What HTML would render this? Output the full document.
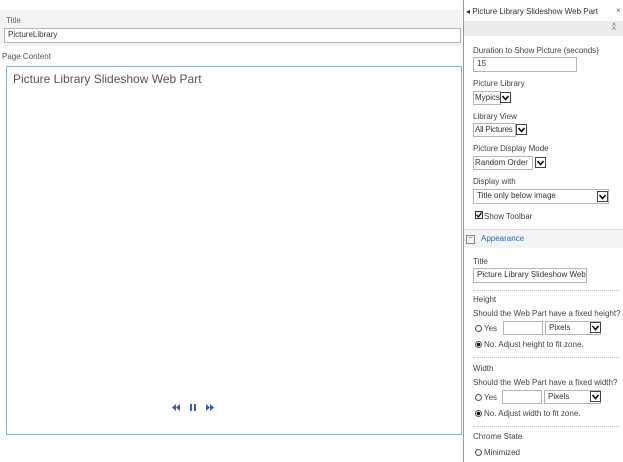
<!DOCTYPE html><html><head><style>
body{margin:0;width:623px;height:462px;overflow:hidden;background:#fff;font-family:"Liberation Sans",sans-serif;font-size:8px;color:#444;position:relative}
.a{position:absolute;white-space:nowrap}
.in{position:absolute;border:1px solid #b5b5b5;background:#fff;box-sizing:border-box;padding-left:3px;line-height:12px;font-size:8px;color:#333;white-space:nowrap;overflow:hidden}
.dd{position:absolute;width:11px;height:11px;border:1px solid #444;box-sizing:border-box;background:#fff}
.dd svg{display:block}
.dot{position:absolute;left:473px;width:146px;border-top:1px dotted #bbb}
.r{position:absolute;width:7px;height:7px;border:1px solid #555;border-radius:50%;box-sizing:border-box}
</style></head><body>
<div class="a" style="left:0;top:10px;width:462px;height:36px;background:#f3f3f3"></div>
<div class="a" style="left:6px;top:16px;color:#666">Title</div>
<div class="in" style="left:4px;top:28px;width:457px;height:15px">PictureLibrary</div>
<div class="a" style="left:2px;top:52px;color:#555">Page Content</div>
<div class="a" style="left:6px;top:66px;width:454px;height:367px;border:1px solid #8ab0cc"></div>
<div class="a" style="left:13px;top:72px;font-size:12px;color:#555">Picture Library Slideshow Web Part</div>
<svg class="a" style="left:172px;top:403px" width="44" height="9" viewBox="0 0 44 9" fill="#3a5fb0">
<path d="M0 4.5L4 1V8Z M4 4.5L8 1V8Z"/><rect x="18" y="1" width="2" height="7"/><rect x="22" y="1" width="2" height="7"/><path d="M34 1L38 4.5L34 8Z M38 1L42 4.5L38 8Z"/></svg>
<div class="a" style="left:463px;top:0;width:1px;height:462px;background:#999"></div>
<div class="a" style="left:466px;top:7px;color:#333">◂ Picture Library Slideshow Web Part</div>
<div class="a" style="left:616px;top:6px;color:#666">×</div>
<div class="a" style="left:464px;top:21px;width:159px;height:15px;background:#ececec"></div>
<div class="a" style="left:612px;top:24px;color:#666;font-size:7px;line-height:4px">˄<br>˄</div>
<div class="a" style="left:473px;top:46px">Duration to Show Picture (seconds)</div>
<div class="in" style="left:473px;top:57px;width:104px;height:15px">15</div>
<div class="a" style="left:473px;top:79px">Picture Library</div>
<div class="in" style="left:473px;top:91px;width:28px;height:14px;padding-left:1px">Mypics</div><div class="dd" style="left:500px;top:92px"><svg width="9" height="9"><path d="M1.5 3L4.5 6.5L7.5 3" stroke="#000" stroke-width="1.6" fill="none"/></svg></div>
<div class="a" style="left:473px;top:112px">Library View</div>
<div class="in" style="left:473px;top:123px;width:43px;height:14px;padding-left:1px;letter-spacing:-0.2px">All Pictures</div><div class="dd" style="left:516px;top:124px"><svg width="9" height="9"><path d="M1.5 3L4.5 6.5L7.5 3" stroke="#000" stroke-width="1.6" fill="none"/></svg></div>
<div class="a" style="left:473px;top:144px">Picture Display Mode</div>
<div class="in" style="left:473px;top:156px;width:60px;height:14px;padding-left:1px">Random Order</div><div class="dd" style="left:535px;top:157px"><svg width="9" height="9"><path d="M1.5 3L4.5 6.5L7.5 3" stroke="#000" stroke-width="1.6" fill="none"/></svg></div>
<div class="a" style="left:473px;top:177px">Display with</div>
<div class="in" style="left:473px;top:189px;width:136px;height:15px">Title only below image</div><div class="dd" style="left:597px;top:191px"><svg width="9" height="9"><path d="M1.5 3L4.5 6.5L7.5 3" stroke="#000" stroke-width="1.6" fill="none"/></svg></div>
<div class="a" style="left:475px;top:211px;width:8px;height:8px;border:1px solid #333;box-sizing:border-box"><svg width="6" height="6" style="display:block"><path d="M0.5 3L2.5 5L5.5 0.5" stroke="#000" stroke-width="1.3" fill="none"/></svg></div>
<div class="a" style="left:484px;top:212px">Show Toolbar</div>
<div class="a" style="left:464px;top:229px;width:159px;height:18px;background:#f3f3f3;border-top:1px solid #ddd"></div>
<div class="a" style="left:466px;top:235px;width:7px;height:7px;border:1px solid #888;font-size:7px;line-height:6px;text-align:center">−</div>
<div class="a" style="left:481px;top:234px;color:#2a6ab8">Appearance</div>
<div class="a" style="left:473px;top:257px">Title</div>
<div class="in" style="left:473px;top:268px;width:114px;height:15px">Picture Library Slideshow Web Part</div>
<div class="dot" style="top:290px"></div>
<div class="a" style="left:473px;top:295px">Height</div>
<div class="a" style="left:473px;top:309px">Should the Web Part have a fixed height?</div>
<div class="r" style="left:475px;top:325px"></div><div class="a" style="left:484px;top:324px">Yes</div>
<div class="in" style="left:503px;top:321px;width:40px;height:14px"></div>
<div class="in" style="left:545px;top:321px;width:56px;height:14px">Pixels</div><div class="dd" style="left:590px;top:322px"><svg width="9" height="9"><path d="M1.5 3L4.5 6.5L7.5 3" stroke="#000" stroke-width="1.6" fill="none"/></svg></div>
<div class="r" style="left:475px;top:341px;background:radial-gradient(#111 45%,#fff 55%)"></div><div class="a" style="left:484px;top:340px">No. Adjust height to fit zone.</div>
<div class="dot" style="top:357px"></div>
<div class="a" style="left:473px;top:364px">Width</div>
<div class="a" style="left:473px;top:378px">Should the Web Part have a fixed width?</div>
<div class="r" style="left:475px;top:394px"></div><div class="a" style="left:484px;top:393px">Yes</div>
<div class="in" style="left:502px;top:390px;width:40px;height:14px"></div>
<div class="in" style="left:544px;top:390px;width:57px;height:14px">Pixels</div><div class="dd" style="left:590px;top:391px"><svg width="9" height="9"><path d="M1.5 3L4.5 6.5L7.5 3" stroke="#000" stroke-width="1.6" fill="none"/></svg></div>
<div class="r" style="left:475px;top:410px;background:radial-gradient(#111 45%,#fff 55%)"></div><div class="a" style="left:484px;top:409px">No. Adjust width to fit zone.</div>
<div class="dot" style="top:426px"></div>
<div class="a" style="left:473px;top:432px">Chrome State</div>
<div class="r" style="left:475px;top:449px"></div><div class="a" style="left:484px;top:448px">Minimized</div>
</body></html>
